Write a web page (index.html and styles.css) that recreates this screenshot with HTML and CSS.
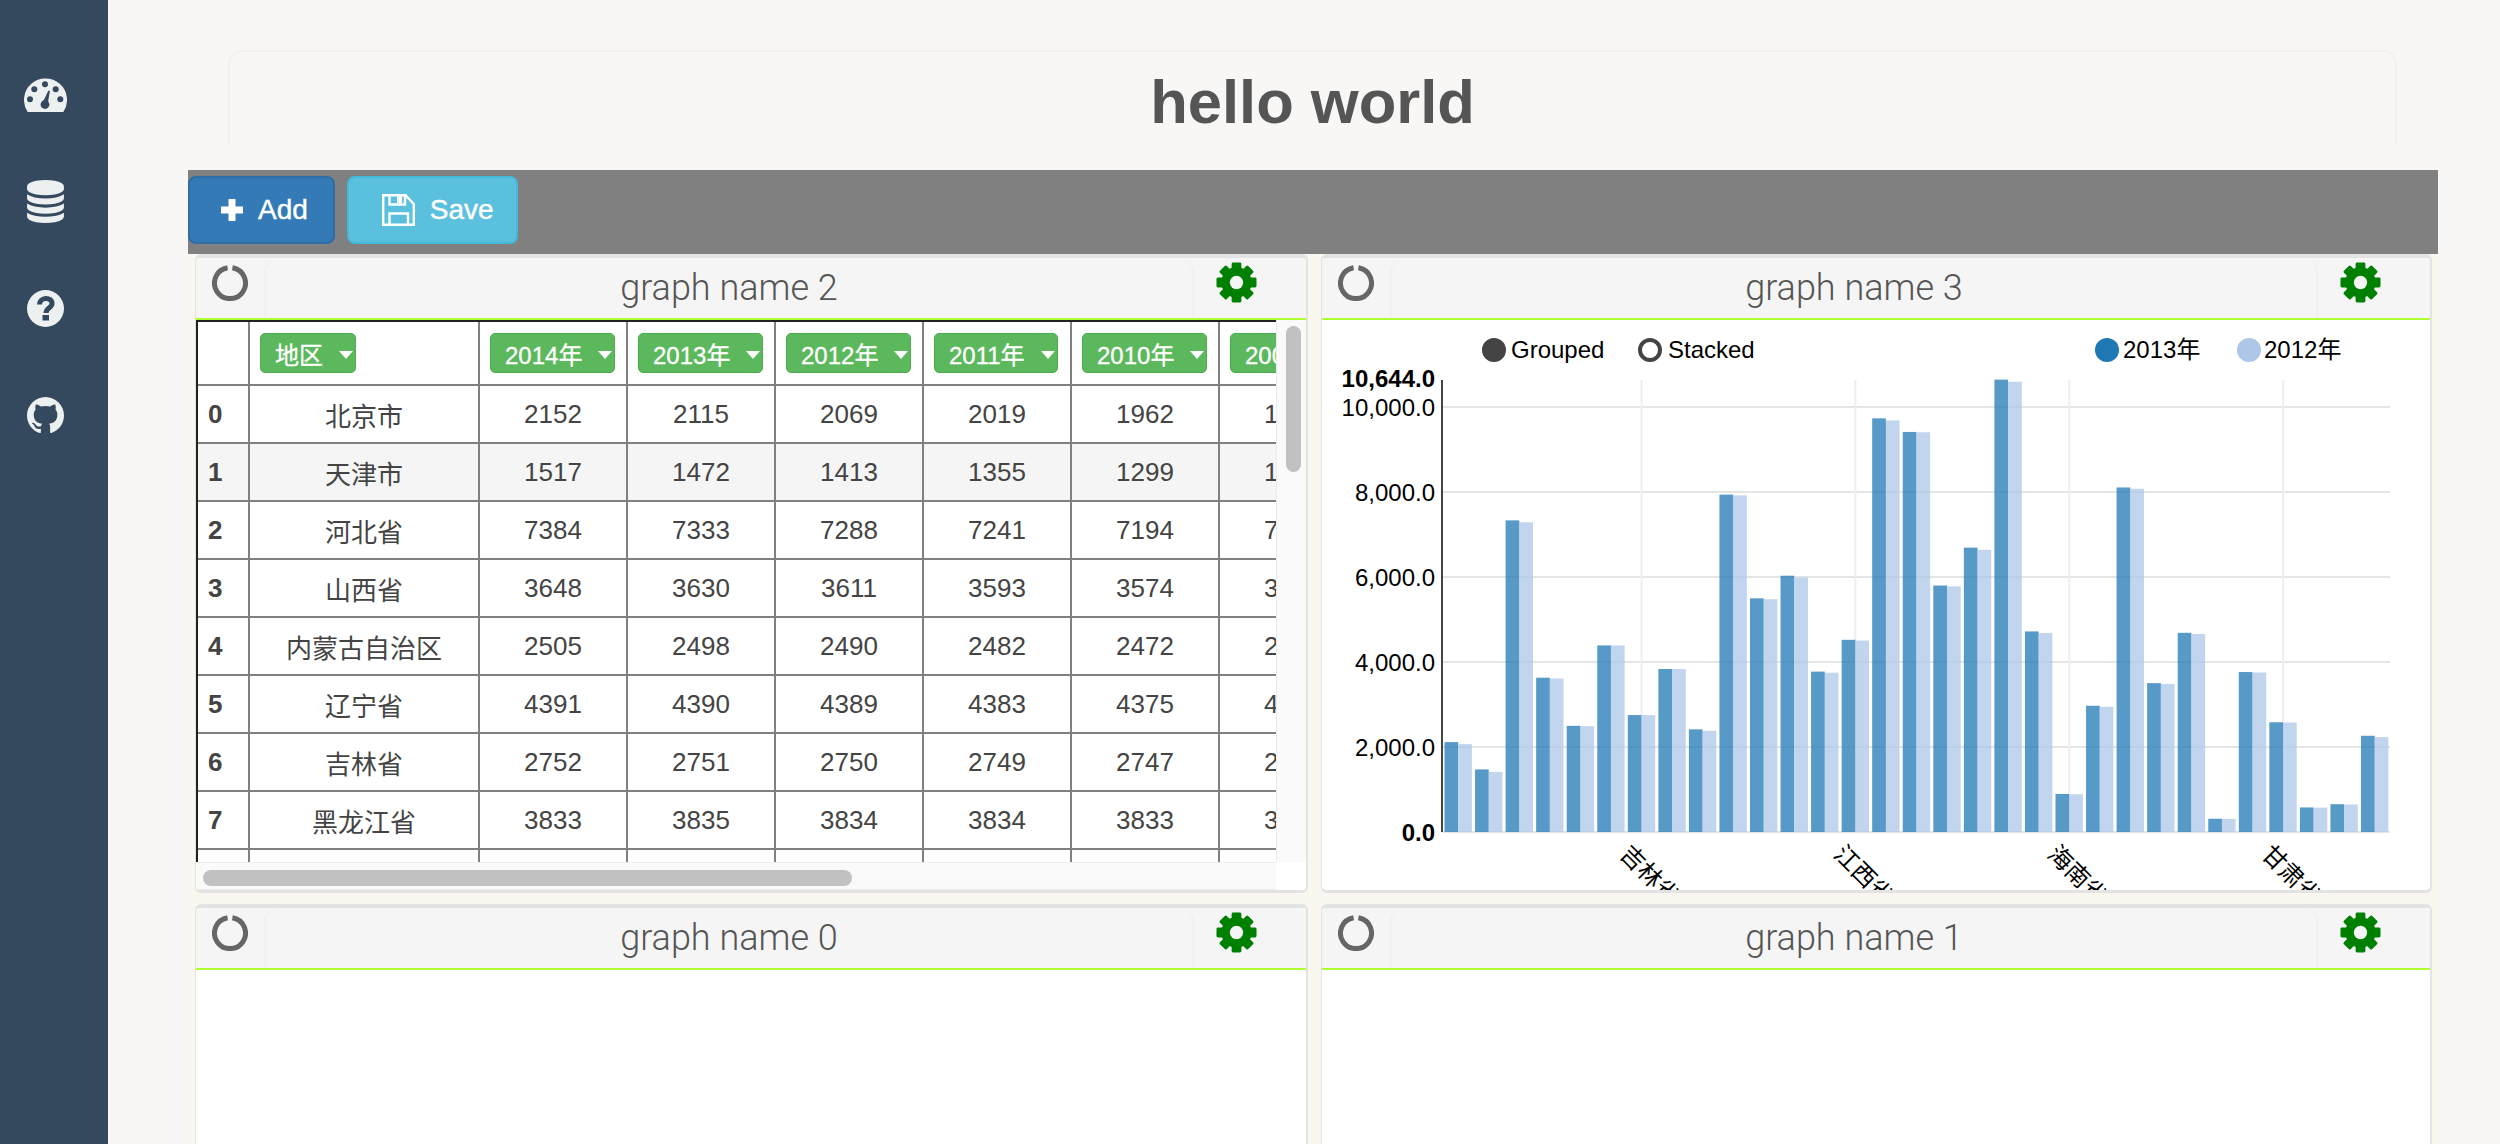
FILE: index.html
```html
<!DOCTYPE html>
<html lang="en">
<head>
  <meta charset="UTF-8">
  <title>hello world</title>
  <link rel="stylesheet" href="styles.css">
</head>
<body>
  <svg class="defs" width="0" height="0">
    <symbol id="gear" viewBox="-21 -21 42 42">
      <g fill="#008000">
        <rect x="-5" y="-20.5" width="10" height="41" rx="1.5"/>
        <rect x="-5" y="-20.5" width="10" height="41" rx="1.5" transform="rotate(45)"/>
        <rect x="-5" y="-20.5" width="10" height="41" rx="1.5" transform="rotate(90)"/>
        <rect x="-5" y="-20.5" width="10" height="41" rx="1.5" transform="rotate(135)"/>
        <circle r="15.5"/>
      </g>
      <circle r="6.8" fill="#f5f5f5"/>
    </symbol>
    <symbol id="spin" viewBox="0 0 36 36">
      <path d="M20.4 2.8A15.5 15.5 0 1 1 15.6 2.8" fill="none" stroke="#666" stroke-width="5"/>
    </symbol>
  </svg>

  <aside class="sidebar">
    <a class="side-item">
      <svg width="43" height="34" viewBox="0 0 43 34">
        <path d="M3.7 34A21.5 21.5 0 1 1 39.3 34Z" fill="#ecf0f1"/>
        <g fill="#34495e">
          <circle cx="6" cy="21.3" r="3"/>
          <circle cx="10.3" cy="11.3" r="3"/>
          <circle cx="21" cy="6.3" r="3"/>
          <circle cx="31.7" cy="11.3" r="3"/>
          <circle cx="36.3" cy="21.3" r="3"/>
          <circle cx="21" cy="26.5" r="4.4"/>
          <path d="M18.5 25L24.4 12.5 25.9 13 23.5 27Z"/>
        </g>
      </svg>
    </a>
    <a class="side-item">
      <svg width="43" height="43" viewBox="0 0 1792 1792">
        <path fill="#ecf0f1" d="M896 768q237 0 443-43t325-127v170q0 69-103 128t-280 93.5-385 34.5-385-34.5-280-93.5-103-128v-170q119 84 325 127t443 43zm0 768q237 0 443-43t325-127v170q0 69-103 128t-280 93.5-385 34.5-385-34.5-280-93.5-103-128v-170q119 84 325 127t443 43zm0-384q237 0 443-43t325-127v170q0 69-103 128t-280 93.5-385 34.5-385-34.5-280-93.5-103-128v-170q119 84 325 127t443 43zm0-1152q208 0 385 34.5t280 93.5 103 128v128q0 69-103 128t-280 93.5-385 34.5-385-34.5-280-93.5-103-128v-128q0-69 103-128t280-93.5 385-34.5z"/>
      </svg>
    </a>
    <a class="side-item">
      <svg width="37" height="37" viewBox="0 0 37 37">
        <circle cx="18.5" cy="18.5" r="18.5" fill="#ecf0f1"/>
        <path d="M12.5 14.5c0-7.5 12.5-8 12.5-1 0 4.5-6 4-6 9.5" fill="none" stroke="#34495e" stroke-width="5"/>
        <rect x="15.5" y="25" width="6.5" height="5.5" fill="#34495e"/>
      </svg>
    </a>
    <a class="side-item">
      <svg width="37" height="37" viewBox="0 0 16 16">
        <path fill="#ecf0f1" d="M8 0C3.58 0 0 3.58 0 8c0 3.54 2.29 6.53 5.47 7.59.4.07.55-.17.55-.38 0-.19-.01-.82-.01-1.49-2.01.37-2.53-.49-2.69-.94-.09-.23-.48-.94-.82-1.13-.28-.15-.68-.52-.01-.53.63-.01 1.08.58 1.23.82.72 1.21 1.87.87 2.33.66.07-.52.28-.87.51-1.07-1.78-.2-3.64-.89-3.64-3.95 0-.87.31-1.59.82-2.15-.08-.2-.36-1.02.08-2.12 0 0 .67-.21 2.2.82.64-.18 1.32-.27 2-.27.68 0 1.36.09 2 .27 1.53-1.04 2.2-.82 2.2-.82.44 1.1.16 1.92.08 2.12.51.56.82 1.27.82 2.15 0 3.07-1.87 3.75-3.65 3.95.29.25.54.73.54 1.48 0 1.07-.01 1.93-.01 2.2 0 .21.15.46.55.38A8.013 8.013 0 0016 8c0-4.42-3.58-8-8-8z"/>
      </svg>
    </a>
  </aside>

  <main class="content">
    <h1 class="page-title">hello world</h1>

    <div class="toolbar">
      <button class="btn btn-add">
        <svg width="22" height="22" viewBox="0 0 22 22"><path d="M7.5 0h7v7.5H22v7h-7.5V22h-7v-7.5H0v-7h7.5z" fill="#fff"/></svg>
        Add
      </button>
      <button class="btn btn-save">
        <svg width="33" height="32" viewBox="0 0 33 32" fill="none" stroke="#fff" stroke-width="2.4">
          <path d="M1.2 1.2H23.5L31.8 10V30.8H1.2Z"/>
          <path d="M7.5 1.2V10.5H23V1.2"/>
          <path d="M7.5 30.8V19.5H26V30.8"/>
          <rect x="15" y="2" width="5" height="7" fill="#fff" stroke="none"/>
        </svg>
        Save
      </button>
    </div>

    <div class="grid">
      <section class="panel">
        <header class="panel-head">
          <svg class="spin"><use href="#spin"/></svg>
          <div class="panel-title">graph name 2</div>
          <svg class="gear"><use href="#gear"/></svg>
        </header>
        <div class="panel-body">
          <div class="table-row">
            <div class="table-wrap">
              <table class="data">
                <thead>
                  <tr>
                    <th></th>
                    <th><button class="col-btn">地区<i class="caret"></i></button></th>
                    <th><button class="col-btn">2014年<i class="caret"></i></button></th>
                    <th><button class="col-btn">2013年<i class="caret"></i></button></th>
                    <th><button class="col-btn">2012年<i class="caret"></i></button></th>
                    <th><button class="col-btn">2011年<i class="caret"></i></button></th>
                    <th><button class="col-btn">2010年<i class="caret"></i></button></th>
                    <th><button class="col-btn">2009年<i class="caret"></i></button></th>
                  </tr>
                </thead>
                <tbody>
                  <tr><td>0</td><td>北京市</td><td>2152</td><td>2115</td><td>2069</td><td>2019</td><td>1962</td><td>1860</td></tr>
                  <tr class="hover"><td>1</td><td>天津市</td><td>1517</td><td>1472</td><td>1413</td><td>1355</td><td>1299</td><td>1228</td></tr>
                  <tr><td>2</td><td>河北省</td><td>7384</td><td>7333</td><td>7288</td><td>7241</td><td>7194</td><td>7034</td></tr>
                  <tr><td>3</td><td>山西省</td><td>3648</td><td>3630</td><td>3611</td><td>3593</td><td>3574</td><td>3427</td></tr>
                  <tr><td>4</td><td>内蒙古自治区</td><td>2505</td><td>2498</td><td>2490</td><td>2482</td><td>2472</td><td>2458</td></tr>
                  <tr><td>5</td><td>辽宁省</td><td>4391</td><td>4390</td><td>4389</td><td>4383</td><td>4375</td><td>4341</td></tr>
                  <tr><td>6</td><td>吉林省</td><td>2752</td><td>2751</td><td>2750</td><td>2749</td><td>2747</td><td>2740</td></tr>
                  <tr><td>7</td><td>黑龙江省</td><td>3833</td><td>3835</td><td>3834</td><td>3834</td><td>3833</td><td>3826</td></tr>
                  <tr><td></td><td></td><td></td><td></td><td></td><td></td><td></td><td></td></tr>
                </tbody>
              </table>
            </div>
            <div class="vscroll"><div class="vthumb"></div></div>
          </div>
          <div class="hscroll-row">
            <div class="hscroll"><div class="hthumb"></div></div>
            <div class="corner"></div>
          </div>
        </div>
      </section>

      <section class="panel">
        <header class="panel-head">
          <svg class="spin"><use href="#spin"/></svg>
          <div class="panel-title">graph name 3</div>
          <svg class="gear"><use href="#gear"/></svg>
        </header>
        <div class="panel-body">
          <svg id="chart" class="chart" width="1108" height="570"></svg>
        </div>
      </section>

      <section class="panel panel-cut">
        <header class="panel-head">
          <svg class="spin"><use href="#spin"/></svg>
          <div class="panel-title">graph name 0</div>
          <svg class="gear"><use href="#gear"/></svg>
        </header>
        <div class="panel-body"></div>
      </section>

      <section class="panel panel-cut">
        <header class="panel-head">
          <svg class="spin"><use href="#spin"/></svg>
          <div class="panel-title">graph name 1</div>
          <svg class="gear"><use href="#gear"/></svg>
        </header>
        <div class="panel-body"></div>
      </section>
    </div>
  </main>

  <script src="chart.js"></script>
</body>
</html>
```

FILE: styles.css
```css
* {
  box-sizing: border-box;
}

html, body {
  height: 100%;
}

body {
  margin: 0;
  display: flex;
  overflow: hidden;
  font-family: "Liberation Sans", "Noto Sans CJK SC", sans-serif;
  color: #444;
  background-color: #f8f7f5;
}

.defs {
  position: absolute;
}

.sidebar {
  flex: 0 0 108px;
  padding: 41px 17px 0 0;
  background-color: #34495e;
}

.side-item {
  display: flex;
  align-items: center;
  justify-content: center;
  height: 107px;
}

.content {
  flex: 1;
  padding: 50px 62px 0 80px;
}

.page-title {
  height: 95px;
  margin: 0 41px 25px 40px;
  border: 2px solid #f2f1ef;
  border-bottom: none;
  border-radius: 14px 14px 0 0;
  font-size: 61.5px;
  line-height: 99px;
  text-align: center;
  color: #555;
}

.toolbar {
  display: flex;
  gap: 12px;
  height: 84px;
  padding-top: 6px;
  background-color: #808080;
}

.btn {
  display: flex;
  align-items: center;
  height: 68px;
  border: 2px solid;
  border-radius: 8px;
  font-family: inherit;
  font-size: 28px;
  -webkit-text-stroke: 0.4px #fff;
  color: #fff;
}

.btn-add {
  gap: 15px;
  padding: 0 25px 0 31px;
  background-color: #337ab7;
  border-color: #2e6da4;
}

.btn-save {
  gap: 15px;
  padding: 0 22px 0 33px;
  background-color: #5bc0de;
  border-color: #46b8da;
}

.grid {
  display: grid;
  grid-template-columns: 1113px 1111px;
  grid-template-rows: 639px 240px;
  gap: 11px 13px;
  padding: 0 6px 0 7px;
  background-color: #f9f7f0;
}

.panel {
  display: flex;
  flex-direction: column;
  overflow: hidden;
  background-color: #fff;
  border: solid #e3e3e3;
  border-width: 4px 2px 3px 1px;
  border-radius: 6px;
}

.panel-cut {
  border-bottom: none;
  border-radius: 6px 6px 0 0;
}

.panel-head {
  display: flex;
  flex: 0 0 62px;
  background-color: #f5f5f5;
  border-bottom: 2px solid #adff2f;
}

.spin {
  flex: none;
  width: 36px;
  height: 36px;
  margin: 7px 16px 0;
}

.panel-title {
  flex: 1;
  border: 2px solid #f0f0f0;
  border-width: 0 2px;
  border-radius: 14px 14px 0 0;
  font-family: Roboto, "Liberation Sans", sans-serif;
  font-weight: 300;
  font-size: 36px;
  line-height: 60px;
  text-align: center;
  color: #555;
}

.gear {
  flex: none;
  width: 41px;
  height: 41px;
  margin: 4px 49px 0 22px;
}

.panel-body {
  flex: 1;
  display: flex;
  flex-direction: column;
}

.table-row {
  display: flex;
  height: 542px;
}

.table-wrap {
  flex: 0 0 1080px;
  overflow: hidden;
}

.data {
  table-layout: fixed;
  width: 1172px;
  border-collapse: separate;
  border-spacing: 0;
  border-top: 2px solid #222;
  border-left: 2px solid #222;
  font-size: 26px;
  text-align: center;
}

.data th:nth-child(1), .data td:nth-child(1) {
  width: 52px;
}

.data th:nth-child(2), .data td:nth-child(2) {
  width: 230px;
}

.data th, .data td {
  width: 148px;
  border-right: 2px solid #808080;
  border-bottom: 2px solid #808080;
}

.data th {
  height: 64px;
  padding: 0 0 0 10px;
  text-align: left;
}

.data td {
  height: 58px;
  padding: 0;
}

.data td:first-child {
  padding-left: 10px;
  text-align: left;
  font-weight: bold;
}

.hover td {
  background-color: #f5f5f5;
}

.col-btn {
  display: inline-flex;
  align-items: center;
  height: 40px;
  padding: 0 2px 0 14px;
  background-color: #5cb85c;
  border: 1px solid #4cae4c;
  border-radius: 5px;
  font-family: inherit;
  font-size: 24px;
  -webkit-text-stroke: 0.3px #fff;
  white-space: nowrap;
  color: #fff;
}

.caret {
  margin: 3px 0 0 16px;
  border-top: 8px solid #fff;
  border-left: 7px solid transparent;
  border-right: 7px solid transparent;
}

.vscroll {
  flex: 1;
  padding: 6px 0 0 9px;
  background-color: #fafafa;
  border-left: 1px solid #ececec;
}

.vthumb {
  width: 15px;
  height: 146px;
  background-color: #c1c1c1;
  border-radius: 8px;
}

.hscroll-row {
  display: flex;
  height: 28px;
}

.hscroll {
  flex: 0 0 1080px;
  padding: 7px 0 0 7px;
  background-color: #fafafa;
  border: solid #ececec;
  border-width: 1px 0;
}

.hthumb {
  width: 649px;
  height: 16px;
  background-color: #c1c1c1;
  border-radius: 8px;
}

.corner {
  flex: 1;
  background-color: #fff;
}

.chart {
  display: block;
  font-family: "Liberation Sans", "Noto Sans CJK SC", sans-serif;
  font-size: 24px;
}
```

FILE: chart.js
```js
// 2013 and 2012 population per province
var names = ['北京市','天津市','河北省','山西省','内蒙古自治区','辽宁省','吉林省','黑龙江省','上海市','江苏省','浙江省','安徽省','福建省','江西省','山东省','河南省','湖北省','湖南省','广东省','广西','海南省','重庆市','四川省','贵州省','云南省','西藏','陕西省','甘肃省','青海省','宁夏','新疆'];
var y2013 = [2115,1472,7333,3630,2498,4390,2751,3835,2415,7939,5498,6030,3774,4522,9733,9413,5799,6691,10644,4719,895,2970,8107,3502,4687,312,3764,2582,578,654,2264];
var y2012 = [2069,1413,7288,3611,2490,4389,2750,3834,2380,7920,5477,5988,3748,4504,9685,9406,5779,6639,10594,4682,887,2945,8076,3484,4659,308,3753,2578,573,647,2233];

var axisX = 120, zeroY = 512, scale = 0.0425, step = 30.55, barW = 13.7;
var html = '';

function line(x1, y1, x2, y2, color) {
  return '<line x1="' + x1 + '" y1="' + y1 + '" x2="' + x2 + '" y2="' + y2 + '" stroke="' + color + '" stroke-width="2"/>';
}

// legend
html += '<circle cx="172" cy="30" r="11" fill="#444" stroke="#444" stroke-width="2"/><text x="189" y="38">Grouped</text>';
html += '<circle cx="328" cy="30" r="10" fill="#fff" stroke="#444" stroke-width="4"/><text x="346" y="38">Stacked</text>';
html += '<circle cx="785" cy="30" r="12" fill="#1f77b4"/><text x="801" y="38">2013年</text>';
html += '<circle cx="927" cy="30" r="12" fill="#aec7e8"/><text x="942" y="38">2012年</text>';

// grid
[0, 2000, 4000, 6000, 8000, 10000].forEach(function (v) {
  var y = zeroY - v * scale;
  html += line(axisX, y, 1068, y, '#e5e5e5');
  html += '<text x="113" y="' + (y + 8.5) + '" text-anchor="end"' + (v === 0 ? ' font-weight="bold"' : '') + '>' + (v === 0 ? '0.0' : v.toLocaleString('en-US') + '.0') + '</text>';
});
html += '<text x="113" y="67" text-anchor="end" font-weight="bold">10,644.0</text>';

[6, 13, 20, 27].forEach(function (i) {
  var x = axisX + 1 + (i + 0.5) * step;
  html += line(x, 60, x, zeroY, '#eee');
  html += '<text transform="translate(' + (x - 23) + ' 535.5) rotate(45)">' + names[i] + '</text>';
});

// bars
y2013.forEach(function (v, i) {
  var x = axisX + 2.5 + i * step;
  html += '<rect x="' + x + '" y="' + (zeroY - v * scale) + '" width="' + barW + '" height="' + (v * scale) + '" fill="#1f77b4" fill-opacity="0.75"/>';
  var w = y2012[i];
  html += '<rect x="' + (x + barW) + '" y="' + (zeroY - w * scale) + '" width="' + barW + '" height="' + (w * scale) + '" fill="#aec7e8" fill-opacity="0.75"/>';
});

html += line(axisX, 60, axisX, zeroY, '#444');

document.getElementById('chart').innerHTML = html;
```
